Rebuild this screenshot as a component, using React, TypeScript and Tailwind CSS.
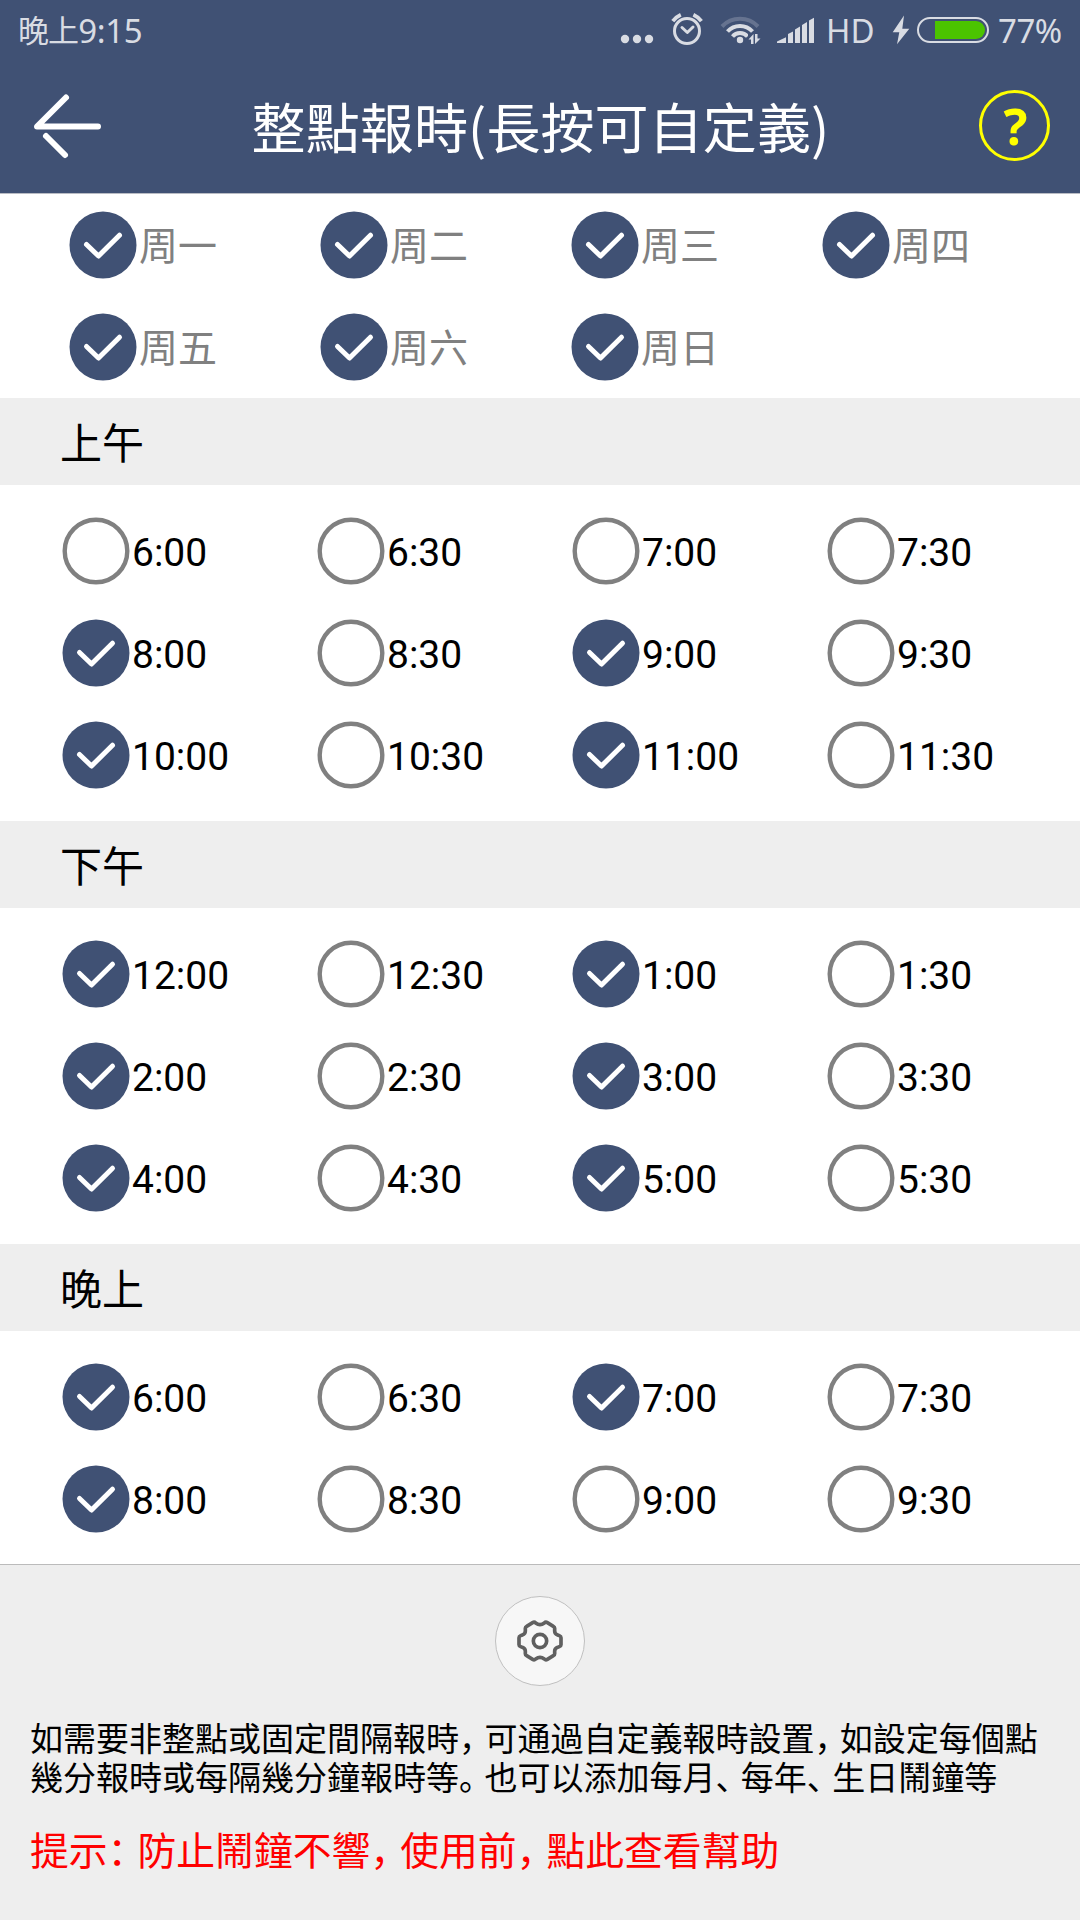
import { useState } from 'react';

interface Slot {
    label: string;
    on: boolean;
}

interface Period {
    title: string;
    slots: Slot[];
}

const CJK = "font-['Noto_Sans_CJK_SC',sans-serif]";
const LATIN = "font-['Noto_Sans',sans-serif]";

const days: string[] = ['周一', '周二', '周三', '周四', '周五', '周六', '周日'];

const toSlots = (labels: string[], active: string[]): Slot[] =>
    labels.map((label) => ({ label, on: active.includes(label) }));

const initialPeriods: Period[] = [
    {
        title: '上午',
        slots: toSlots(
            ['6:00', '6:30', '7:00', '7:30', '8:00', '8:30', '9:00', '9:30', '10:00', '10:30', '11:00', '11:30'],
            ['8:00', '9:00', '10:00', '11:00']
        )
    },
    {
        title: '下午',
        slots: toSlots(
            ['12:00', '12:30', '1:00', '1:30', '2:00', '2:30', '3:00', '3:30', '4:00', '4:30', '5:00', '5:30'],
            ['12:00', '1:00', '2:00', '3:00', '4:00', '5:00']
        )
    },
    {
        title: '晚上',
        slots: toSlots(
            ['6:00', '6:30', '7:00', '7:30', '8:00', '8:30', '9:00', '9:30'],
            ['6:00', '7:00', '8:00']
        )
    }
];

// Round check mark, filled when the slot is on
function Check({ on }: { on: boolean }) {
    return (
        <svg className="h-[68px] w-[68px] shrink-0" viewBox="0 0 68 68" fill="none">
            {on ? (
                <>
                    <circle cx="34" cy="34" r="33.5" fill="#405174" />
                    <path d="M17.5 33.5 L29.5 45 L50.5 24.2" stroke="#fff" strokeWidth="5" strokeLinecap="round" strokeLinejoin="round" />
                </>
            ) : (
                <circle cx="34" cy="34" r="31.3" stroke="#808080" strokeWidth="4.4" />
            )}
        </svg>
    );
}

// Full-width punctuation takes less room than a character
function Text({ children }: { children: string }) {
    return (
        <>
            {children.split(/([，。、：])/).map((part, i) =>
                i % 2 === 1 ? (
                    <span key={i} className="tracking-[0.27em] [font-feature-settings:'halt']">{part}</span>
                ) : (
                    part
                )
            )}
        </>
    );
}

function StatusBar() {
    return (
        <div className="grid h-[62px] grid-cols-[616px_210px_62px_110px_1fr] text-[33px] leading-[62px] text-[#d9dce3]">
            <div className="flex pl-[18px]">
                <span className="-mt-px text-[31px] leading-[60px] tracking-[-0.03em]">晚上</span>
                <span className={`${LATIN} tracking-[-0.01em]`}>9:15</span>
            </div>
            <svg className="h-[62px] w-[209px]" viewBox="616 0 209 62" fill="none">
                <g fill="#d9dce3">
                    <circle cx="625" cy="39" r="4.2" />
                    <circle cx="637" cy="39" r="4.2" />
                    <circle cx="649" cy="39" r="4.2" />
                </g>
                {/* alarm */}
                <g stroke="#d9dce3" strokeWidth="3">
                    <circle cx="687" cy="31" r="12.5" />
                    <path d="M682 27.5 L687.3 32.5 L693 27" strokeLinecap="round" strokeLinejoin="round" />
                    <path d="M672.8 21.2 Q676 17 680.8 14.8" strokeWidth="3.8" />
                    <path d="M701.4 21.2 Q698.2 17 693.4 14.8" strokeWidth="3.8" />
                </g>
                {/* wifi */}
                <g stroke="#d9dce3" strokeWidth="4">
                    <path d="M722 26.5 A25 25 0 0 1 758 26.5" opacity="0.25" />
                    <path d="M727.5 31.5 A17 17 0 0 1 752.5 31.5" />
                    <path d="M732.5 36.5 A10 10 0 0 1 747.5 36.5" />
                </g>
                <circle cx="740" cy="40" r="3.2" fill="#d9dce3" />
                <path d="M748 33.5 H761 V45 H748 Z" fill="#405174" />
                <path d="M753.5 34 L748.5 39.5 H751 V44 H753.5 Z M755 44 L760.5 38.5 H757.5 V34 H755 Z" fill="#d9dce3" />
                {/* signal */}
                <path
                    d="M777 43 V41.5 L786 37.3 V43 Z M788 43 V34 L793 31.5 V43 Z M795 43 V29.5 L800 26.5 V43 Z M802 43 V25 L807 22 V43 Z M809 43 V20.5 L814 17.7 V43 Z"
                    fill="#d9dce3"
                />
            </svg>
            <span className={LATIN}>HD</span>
            <svg className="h-[62px] w-[110px]" viewBox="888 0 110 62" fill="none">
                <path d="M904 15.5 L892.7 32.3 H899.3 L897 44.3 L909.3 28.7 H902.3 Z" fill="#d9dce3" />
                <rect x="918" y="18" width="70" height="24" rx="12" stroke="#d9dce3" strokeWidth="2" />
                <path d="M935 21 H976 A9 9 0 0 1 976 39 H935 Z" fill="#4bc400" />
            </svg>
            <span className={`${LATIN} tracking-[-0.015em]`}>77%</span>
        </div>
    );
}

function GearIcon() {
    return (
        <svg className="h-[60px] w-[60px]" viewBox="0 0 180 180" fill="none" stroke="#606060" strokeWidth="11">
            <path d="M27 80 Q27 76 32 74 L37 72 Q46 69 46 60 V52 Q46 48 50 46 L68 35 Q73 32 77 36 Q90 46 103 36 Q107 32 112 35 L130 46 Q134 48 134 52 V60 Q134 69 143 72 L148 74 Q153 76 153 80 V101 Q153 105 148 107 L143 109 Q134 112 134 121 V128 Q134 132 130 134 L112 145 Q107 148 103 144 Q90 134 77 144 Q73 148 68 145 L50 134 Q46 132 46 128 V121 Q46 112 37 109 L32 107 Q27 105 27 101 Z" />
            <circle cx="90" cy="90" r="20" fill="#fff" />
        </svg>
    );
}

export default function App() {
    const [periods, setPeriods] = useState<Period[]>(initialPeriods);

    const toggle = (title: string, label: string) => {
        setPeriods((prev) =>
            prev.map((p) =>
                p.title === title
                    ? { ...p, slots: p.slots.map((s) => (s.label === label ? { ...s, on: !s.on } : s)) }
                    : p
            )
        );
    };

    return (
        <main className={`${CJK} h-[1920px] w-[1080px] overflow-hidden bg-[#eee] text-black`}>
            <header className="h-[194px] border-b border-[#b9bcc4] bg-[#405174]">
                <StatusBar />
                <div className="flex h-[131px] items-start justify-between pl-[30px] pr-[30px] text-white">
                    <svg className="mt-[28px] h-[72px] w-[72px]" viewBox="30 90 72 72" fill="none" stroke="#fff" strokeWidth="6" strokeLinecap="round" strokeLinejoin="round">
                        <path d="M98 126.5 H37 L66 97.5 M46 136 L65 155" />
                    </svg>
                    <h1 className="mt-[26px] text-[54px] leading-[76px] tracking-[0.002em]">整點報時(長按可自定義)</h1>
                    <div className={`${LATIN} mt-[28px] flex h-[71px] w-[71px] items-center justify-center rounded-full border-[3px] border-[#ff0] pl-[2px] text-[50px] font-bold leading-[66px] text-[#ff0]`}>
                        ?
                    </div>
                </div>
            </header>

            <section className="grid grid-cols-[251px_251px_251px_251px] bg-white pl-[69px]">
                {days.map((day) => (
                    <div key={day} className="flex h-[102px] items-center gap-[2px] text-[39px] text-[#808080]">
                        <Check on />
                        <span className="pb-[3px]">{day}</span>
                    </div>
                ))}
            </section>

            {periods.map((period) => (
                <section key={period.title} className="bg-white">
                    <h2 className="flex h-[87px] items-center bg-[#eee] pb-[3px] pl-[60px] text-[42px]">{period.title}</h2>
                    <div className="grid grid-cols-[255px_255px_255px_255px] py-[15px] pl-[62px]">
                        {period.slots.map((slot) => (
                            <div
                                key={slot.label}
                                onClick={() => toggle(period.title, slot.label)}
                                className="flex h-[102px] items-center gap-[2px] font-[Roboto] text-[39px]"
                            >
                                <Check on={slot.on} />
                                <span className="pt-[4px]">{slot.label}</span>
                            </div>
                        ))}
                    </div>
                </section>
            ))}

            <footer className="-mt-px border-t border-[#bbb] bg-[#eee] px-[30px] pt-[31px]">
                <div className="mx-auto flex h-[90px] w-[90px] items-center justify-center rounded-full border border-[#c0c0c0] bg-[#f7f7f7]">
                    <GearIcon />
                </div>
                <div className="mt-[32px] whitespace-nowrap text-[33px] leading-[39px]">
                    <p><Text>如需要非整點或固定間隔報時，可通過自定義報時設置，如設定每個點</Text></p>
                    <p><Text>幾分報時或每隔幾分鐘報時等。也可以添加每月、每年、生日鬧鐘等</Text></p>
                </div>
                <p className="mt-[26px] whitespace-nowrap text-[38.8px] leading-[52px] text-[#f00]">
                    <Text>提示：防止鬧鐘不響，使用前，點此查看幫助</Text>
                </p>
            </footer>
        </main>
    );
}
